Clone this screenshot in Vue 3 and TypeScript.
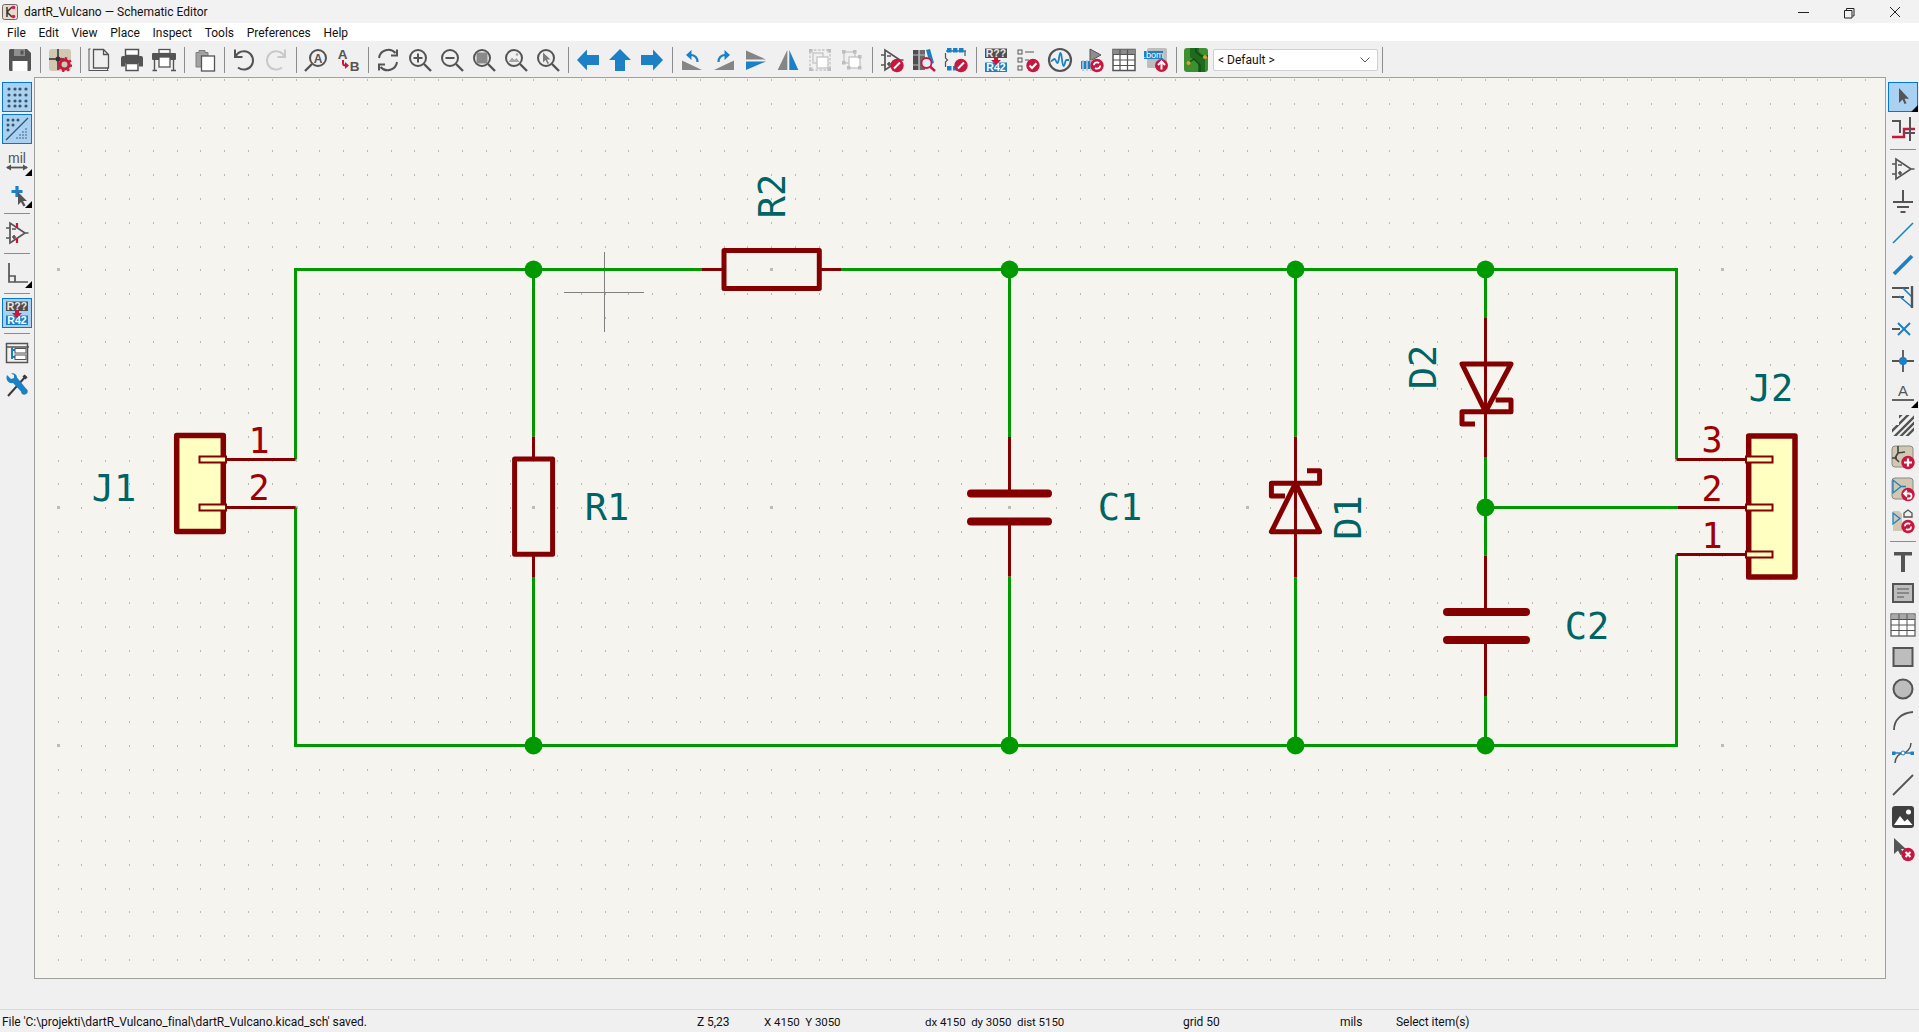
<script setup lang="ts">
const G = '#545454'
const B = '#1b80c6'
const R = '#c8173f'
const T = '#d2c7b0'

const line = (d: string, c = G, w = 1.6) => `<path d="${d}" fill="none" stroke="${c}" stroke-width="${w}"/>`
const mag = (inner: string) =>
  `<circle cx="10" cy="10" r="8" fill="none" stroke="${G}" stroke-width="2"/>${line('M16 16l7 7', G, 2.4)}${inner}`
const badge = (inner: string, cx = 17, cy = 17.5, r = 6.7) => `<circle cx="${cx}" cy="${cy}" r="${r}" fill="${R}"/>${inner}`
const pencil = badge(line('M14 20.5l6-6', '#fff', 2))
const tick = badge(line('M13.5 17.5l2.5 2.5 4.5-4.8', '#fff', 2))
const plus = badge(line('M17 13.5v8M13 17.5h8', '#fff', 2.2))
const back = badge(line('M14 16.5h4a2.5 2.5 0 0 1 0 5h-2M16 13.5l-3 3 3 3', '#fff', 1.8))
const syncMark = `<circle cx="17" cy="17.5" r="3.2" fill="none" stroke="#fff" stroke-width="1.7" stroke-dasharray="7 3"/>`
const sync = badge(syncMark)
const opamp = (c = G) => line('M5 2v20l15-10zM20 12h3.5M1 7h4M1 17h4M7 8h4M9 14v4M7 16h4', c, 1.7)
const label = (s: string, x: number, y: number, size: number, fill = G, weight = 700) =>
  `<text x="${x}" y="${y}" font-size="${size}" font-family="'Liberation Sans',sans-serif" font-weight="${weight}" fill="${fill}" text-anchor="middle">${s}</text>`
const annotate = `<rect x="1" y="0.5" width="22" height="9.5" fill="#4e4e4e"/>${label('R??', 12, 9, 10.5, '#e8e8e8')}<rect x="1" y="14.5" width="22" height="9.5" fill="${B}"/>${label('R42', 12, 23, 10.5, '#fff')}<path d="M10 9h4v3h3l-5 5-5-5h3z" fill="${R}"/>`
const squares = (pts: number[][], size = 3.5, fill = '#bdbdbd') =>
  pts.map(p => `<rect x="${p[0]}" y="${p[1]}" width="${size}" height="${size}" fill="${fill}"/>`).join('')

const icons: Record<string, string> = {
  save: `<path fill="${G}" d="M2.5 1H19l4 4v16.5a1.5 1.5 0 0 1-1.5 1.5h-19A1.5 1.5 0 0 1 1 21.5v-19A1.5 1.5 0 0 1 2.5 1z"/><rect x="6" y="1" width="11" height="7" fill="#8f8f8f"/><rect x="12.5" y="2.5" width="3" height="4" fill="${G}"/><rect x="4.5" y="13" width="15" height="10" fill="#fff"/>`,
  setup: `<rect x="1" y="1" width="22" height="22" rx="3" fill="${T}"/>${line('M10 1v8M1 11h7M12 11h4M10 13v9', '#555', 2)}<circle cx="10" cy="11" r="2.5" fill="#333"/><circle cx="16.5" cy="16.5" r="4.5" fill="none" stroke="${R}" stroke-width="3"/><circle cx="16.5" cy="16.5" r="6.6" fill="none" stroke="${R}" stroke-width="2" stroke-dasharray="2.4 2.8"/>`,
  newpage: line('M5.5 1.5h10l5 5V20h-15zM15.5 1.5v5h5', G, 1.3) + line('M1 1v22M1 22.5h19.5M.5 1h2M19.5 20v3', G, 1),
  print: `<rect x="5.5" y="1.5" width="13" height="6" fill="#fff" stroke="${G}" stroke-width="1.5"/><path d="M3 8h18a2 2 0 0 1 2 2v8.5h-4V15H5v3.5H1V10a2 2 0 0 1 2-2z" fill="${G}"/><rect x="6" y="15.5" width="12" height="7" fill="#fff" stroke="${G}" stroke-width="1.5"/>`,
  plot: `<rect x="7" y="1.5" width="11" height="4" fill="#fff" stroke="${G}" stroke-width="1.3"/><rect x="0" y="5" width="24" height="7" rx="1" fill="${G}"/><rect x="7" y="9" width="11" height="10" fill="#fff" stroke="${G}" stroke-width="1.3"/>${line('M2.5 12v10M21.5 12v10M.5 22.5H5M19 22.5h5', G, 1.4)}`,
  paste: `<path d="M4 4.5h3v-2h6v2h3V19H4z" fill="#a2a2a2" stroke="#7e7e7e"/><rect x="9.5" y="8" width="13" height="15" fill="#fff" stroke="${G}" stroke-width="1.3"/>`,
  undo: line('M3 1.5V9h7.5M3.5 8.5A9.2 9.2 0 1 1 6 19.5', G, 2),
  redo: line('M21 1.5V9h-7.5M20.5 8.5A9.2 9.2 0 1 0 18 19.5', '#c9c9c9', 2),
  find: `<circle cx="14" cy="10" r="8" fill="none" stroke="${G}" stroke-width="2"/>${line('M8 16l-7 7', G, 2.4)}${label('A', 14, 14.5, 12, G)}`,
  replace: `${label('A', 6.5, 11, 13.5, G)}${label('B', 18.5, 22.5, 13.5, G)}${line('M7 12v3a2.5 2.5 0 0 0 2.5 2.5', R, 2)}<path d="M9 14l4 3.5-4 3.5z" fill="${R}"/>`,
  refresh: line('M3 10a9.5 9.5 0 0 1 16.5-5M21 14a9.5 9.5 0 0 1-16.5 5', G, 2) + line('M21 1.5v6h-6M3 22.5v-6h6', G, 2),
  zoomin: mag(line('M10 5.5v9M5.5 10h9', G, 2)),
  zoomout: mag(line('M5.5 10h9', G, 2)),
  zoomfit: mag(`<rect x="4.5" y="4.5" width="11" height="11" rx="1" fill="#8a8a8a"/>`),
  zoomobj: mag(`<path d="M4.5 14L8 9.5l2.5 2.5 2-2 3 4z" fill="#a5a5a5"/><circle cx="13" cy="6.5" r="1.3" fill="#a5a5a5"/>`),
  zoomsel: mag(`<path d="M7 4.5v10L9.500 12l2 4 1.500-.8-2-3.800h3.500z" fill="#7c7c7c"/>`),
  left: `<path fill="${B}" d="M1 12L11 1.5V7h12v10H11v5.5z"/>`,
  up: `<path fill="${B}" d="M12 1l11 11h-6v11H7V12H1z"/>`,
  right: `<path fill="${B}" d="M23 12L13 1.5V7H1v10h12v5.5z"/>`,
  rotccw: `<path fill="#858585" d="M2 12.5V22h20z"/>${line('M17.5 14a6.5 6.5 0 0 0-6.5-7', B, 2.2)}<path fill="${B}" d="M6 7l5.5-5v10z"/>`,
  rotcw: `<path fill="#858585" d="M22 12.5V22H2z"/>${line('M6.5 14a6.5 6.5 0 0 1 6.5-7', B, 2.2)}<path fill="${B}" d="M18 7l-5.5-5v10z"/>`,
  mirrorv: `<path fill="#858585" d="M2 2.5v9h20z"/><path fill="${B}" d="M2 13.5V22l20-8.500z"/>`,
  mirrorh: `<path fill="#858585" d="M11.3 2v20H1.700z"/><path fill="${B}" d="M13.3 2v20h9z"/>`,
  group: `<rect x="2" y="2" width="20" height="20" fill="none" stroke="#c4c4c4" stroke-width="1.3" stroke-dasharray="2.5 1.5"/><rect x="5" y="5" width="10" height="10" fill="none" stroke="#c4c4c4" stroke-width="1.3"/><rect x="9" y="9" width="11" height="11" fill="#fff" stroke="#c4c4c4" stroke-width="1.3"/>${squares([[1, 1], [19.5, 1], [1, 19.5], [19.5, 19.5]])}`,
  ungroup: `<rect x="4" y="4" width="11" height="11" fill="none" stroke="#c4c4c4" stroke-width="1.3"/><rect x="9" y="9" width="11" height="11" fill="#fff" stroke="#c4c4c4" stroke-width="1.3"/>${squares([[2, 2], [13, 2], [2, 13], [18, 7], [7, 18], [18, 18]])}`,
  symedit: opamp() + pencil,
  browser: `<rect x="1" y="2" width="5.5" height="20" fill="#4e4e4e"/><rect x="7.5" y="2" width="5.5" height="20" fill="#6a6a6a"/>${line('M1 7h5.5M7.5 7H13M1 17h5.5', '#bbb', 1)}<path d="M14 2l4-1 4 14-4 1z" fill="${B}"/><circle cx="14.5" cy="15" r="5" fill="#e8eef2" stroke="${R}" stroke-width="1.8"/>${line('M18 18.5l5 4.5', R, 2.4)}`,
  fpedit: `${squares([[3, 0], [9, 0], [15, 0], [3, 18], [9, 18]], 4.5, B)}${line('M1.5 5v5l2 2-2 2v5M21 3v5', G, 1.2)}${line('M2 3h20', B, 1.5)}${pencil}`,
  annotate,
  erc: `<rect x="2" y="2" width="4" height="4" fill="none" stroke="${G}"/><rect x="2" y="10" width="4" height="4" fill="none" stroke="${G}"/><rect x="2" y="18" width="4" height="4" fill="none" stroke="${G}"/>${line('M9 4h9M9 12h4', G, 1.2)}${tick}`,
  sim: `<circle cx="12" cy="12" r="11" fill="none" stroke="${G}" stroke-width="2.2"/>${line('M3 13c2 0 2-2 3.5-2s1.500 4 3 4 1.500-10 3-10 1.500 13 3 13 1.500-6 3-6h2.500', B, 1.8)}`,
  assign: `<path d="M10 1v12l11-6z" fill="#8d8d8d" stroke="${G}"/><rect x="1" y="13" width="13" height="8" fill="${B}"/>${line('M3 12v11M7 12v11M11 12v11', '#b8c8d4', 1.6)}${sync}`,
  table: `<rect x="1" y="1.5" width="22" height="21" fill="#fff" stroke="${G}" stroke-width="1.5"/><rect x="1" y="1.5" width="22" height="5" fill="#8a8a8a"/>${line('M1 6.5h22M1 12h22M1 17.5h22M8 1.5v21M15.5 1.5v21', G, 1.2)}`,
  bom: `<rect x="3" y="0" width="20" height="20" rx="1.5" fill="#bdbdbd"/><rect x="0" y="3" width="19" height="8" fill="${B}"/>${label('.bom', 9.5, 10, 9, '#fff', 400)}${badge(line('M17.5 21.5v-8M14 17l3.5-3.5L21 17', '#fff', 2), 17.5, 17.5, 6.5)}`,
  pcb: `<rect x="0" y="0" width="24" height="24" rx="3" fill="#3e8f2d"/><path d="M6 0h9v4l6 5v15h-7v-9L6 9z" fill="#1e6a1e"/>${line('M4 15l6-4 6 6v7M12 0v4l5 4h7', '#0c4d14', 1.3)}<circle cx="4.5" cy="15" r="2" fill="#e0a030"/><circle cx="21" cy="9" r="2" fill="#e0a030"/>`,
  grid: [4, 10, 16, 21].flatMap(y => [4, 10, 15, 21].map(x => `<circle cx="${x}" cy="${y}" r="1.6" fill="#3d5468"/>`)).join(''),
  gridover: `${[3, 8, 13].flatMap(y => [3, 8, 13].map(x => x + y < 20 ? `<circle cx="${x}" cy="${y}" r="1.5" fill="#3d5468"/>` : '')).join('')}${line('M1 23L23 1', '#3d5468', 1.2)}${[21, 18, 15, 12, 21, 18, 15, 21, 18, 21].map((x, i) => `<circle cx="${x}" cy="${i < 4 ? 21 : i < 7 ? 18 : i < 9 ? 15 : 12}" r=".8" fill="#3d5468"/>`).join('')}`,
  mil: `${label('mil', 12, 13.5, 14, G, 400)}${line('M2 18.5h20', G, 1.8)}<path d="M1 18.5l5-3v6zM23 18.5l-5-3v6z" fill="${G}"/>`,
  cursor: `${line('M12 5v11M6.5 10.500h11', B, 3.2)}<path d="M13 11v13l3-3 2.5 4.5 2-1-2.500-4.500h4z" fill="#555"/>`,
  opampsel: opamp() + line('M12 2v5M12 17v5', R, 2.2),
  axes: line('M4 2v19h19M4 15h6v6', G, 1.7),
  hier: `<rect x="1.5" y="2.5" width="21" height="19" fill="none" stroke="${G}" stroke-width="1.5"/>${line('M1 6h23', G, 1.5)}${line('M7 6v12M7 9h3M7 16h3', B, 2)}<rect x="10" y="7.5" width="11" height="4.5" fill="#fff" stroke="${G}"/><rect x="10" y="14" width="11" height="4.5" fill="#fff" stroke="${G}"/>`,
  tools: `${line('M3 23L21 3', '#3a3a3a', 2)}${line('M18.5 2.5l3 3', '#3a3a3a', 3)}<path d="M2 2l4 4 3-1V2L6 .5c3-1 6 1 6 4l9 11c2 1 3 5-1 6-3 1-4-2-4-3L8 10C4 11 0 7 2 2z" fill="${B}"/>`,
  select: `<path d="M8 3v15l3.5-3.5 2 4.500 2-.8-2-4.500H18z" fill="#555"/>`,
  highlight: line('M1 4h8v12', G, 2) + line('M1 20h12v-8h11', R, 2.4) + line('M19 0v24M13 16h11', G, 2),
  opampr: opamp(),
  ground: line('M12 1v12M2 13h20M6 18h12M9.5 23h5', G, 2),
  wire: line('M2 22L22 2', B, 1.6),
  bus: line('M3 21L21 3', B, 3.8),
  entry: line('M1 3h17M1 12h12', G, 2) + line('M12 3l9 9M8 11l13 11', B, 1.6) + line('M21 1v22', G, 2.4),
  noconn: line('M1 12h8', G, 2) + line('M7 6l12 12M19 6L7 18', B, 2),
  junction: line('M1 12h22M12 1v22', G, 1.8) + `<circle cx="12" cy="12" r="4" fill="${B}"/>`,
  textlabel: `${label('A', 12, 15, 15, G, 400)}${line('M1 19h22', G, 1.8)}`,
  hatch: `<clipPath id="hatch-clip"><path d="M8 2h15v21H1V12h7z"/></clipPath><g clip-path="url(#hatch-clip)"><rect x="1" y="2" width="22" height="21" fill="#f2f2f2"/>${line('M-2 14L14-2M-2 21L22-3M3 24L27 0M9 24L27 6M15 24l12-12', G, 2.4)}</g>`,
  sheetadd: `<rect x="1" y="1" width="21" height="21" rx="3" fill="${T}" stroke="#8a8a8a"/>${line('M7 1v7M1 13h5M7 8l-3 5 4 4M7 8l7-1', '#444', 1.6)}${plus}`,
  sheetback: `<rect x="1" y="1" width="21" height="21" rx="3" fill="${T}" stroke="#8a8a8a"/>${line('M2 3v13l8-6.5zM10 9.5h5', B, 1.3)}${back}`,
  sheetsync: `<path d="M2 2h6l3 3v17H2z" fill="${T}"/>${line('M2 4v11l7-5.5z', B, 1.3)}${line('M13 4l4-3 4 3v4h-8z', G, 1.3)}${sync}`,
  text: `<path d="M3 3h18v3.5h-7V23h-4V6.5H3z" fill="${G}"/>`,
  textbox: `<rect x="2" y="3" width="20" height="18" fill="#bdbdbd" stroke="${G}" stroke-width="2"/>${line('M6 8h12M6 12h12M6 16h7', G, 1.2)}`,
  tableb: `<rect x="0" y="1" width="24" height="22" fill="#fff" stroke="${G}" stroke-width="1.2"/><rect x=".5" y="1.5" width="23" height="5" fill="#a8a8a8"/>${line('M0 6.5h24M0 12h24M0 17.5h24M8 1v22M16 1v22', G, 1)}`,
  rect: `<rect x="2.5" y="3" width="19" height="18" fill="#bdbdbd" stroke="${G}" stroke-width="2"/>`,
  circle: `<circle cx="12" cy="12" r="9.5" fill="#bdbdbd" stroke="${G}" stroke-width="2"/>`,
  arc: line('M3 21C3 11 10 4 22 3', G, 1.8),
  bezier: line('M4 12h16', B, 1.5) + line('M4 22c0-6 5-10 8-10s8-4 8-10', G, 1.5) + `<rect x="1" y="10.5" width="3.5" height="3.5" fill="${B}"/><rect x="19.5" y="10.5" width="3.5" height="3.5" fill="${B}"/><circle cx="12" cy="12" r="2" fill="#fff" stroke="${B}"/>`,
  lineb: line('M2 22L22 2', G, 1.8),
  image: `<rect x="1" y="1" width="22" height="22" rx="3" fill="#3f3f3f"/><circle cx="17.5" cy="7" r="2.5" fill="#fff"/><path d="M3 20l6-9 4.5 5.5 3-2.5 5 6z" fill="#fff"/>`,
  delete: `<path d="M3 1v16l4-3.5 2.5 4.5 3-2-2.500-4H15z" fill="#555"/>${badge(line('M14.5 15l5 5M19.5 15l-5 5', '#fff', 2))}`,
}

const topTools = ['save', '|', 'setup', '|', 'newpage', 'print', 'plot', '|', 'paste', '|', 'undo', 'redo', '|', 'find', 'replace', '|', 'refresh', 'zoomin', 'zoomout', 'zoomfit', 'zoomobj', 'zoomsel', '|', 'left', 'up', 'right', '|', 'rotccw', 'rotcw', 'mirrorv', 'mirrorh', 'group', 'ungroup', '|', 'symedit', 'browser', 'fpedit', '|', 'annotate', 'erc', 'sim', 'assign', 'table', 'bom', '|', 'pcb']
const leftTools = ['grid*', 'gridover*', 'mil^', 'cursor^', '|', 'opampsel', '|', 'axes^', '|', 'annotate*', '|', 'hier', 'tools']
const rightTools = ['select*^', 'highlight', '|', 'opampr', 'ground', 'wire', 'bus', 'entry', 'noconn', 'junction', 'textlabel^', 'hatch', 'sheetadd', 'sheetback', 'sheetsync', '|', 'text', 'textbox', 'tableb', 'rect', 'circle', 'arc', 'bezier', 'lineb', 'image', 'delete']
const iconName = (t: string) => t.replace(/[*^]/g, '')

const menus = ['File', 'Edit', 'View', 'Place', 'Inspect', 'Tools', 'Preferences', 'Help']

// schematic grid: 50 mil at Z 5,23
const pitch = 23.78
const gridX = 295.5
const gridY = 269.3
let small = ''
let large = ''
for (let i = -11; i < 67; i++) {
  for (let j = -8; j < 30; j++) {
    const x = Math.round(gridX + i * pitch)
    const y = Math.round(gridY + j * pitch)
    if (x < 36 || x > 1883 || y < 79 || y > 976) continue
    if (i % 10 === 0 && j % 10 === 0) large += `M${x - 1} ${y - 1}h3v3h-3z`
    else small += `M${x} ${y}h1v2h-1z`
  }
}

const topY = 269.5
const botY = 745.5
const wires = [
  `M702 ${topY}H295.5V459.5`,
  `M295.5 507.5V${botY}H1676.5V554.5`,
  `M841 ${topY}H1676.5V459.5`,
  `M533.5 ${topY}V436.7`, `M533.5 577.7V${botY}`,
  `M1009.5 ${topY}V437`, `M1009.5 576.5V${botY}`,
  `M1295.5 ${topY}V436.7`, `M1295.5 577.3V${botY}`,
  `M1485.5 ${topY}V318`, 'M1485.5 457.7V555.7', `M1485.5 696V${botY}`,
  'M1485.5 507.5H1678',
]
const pins = [
  `M702 ${topY}H724`, `M819 ${topY}H841`,
  'M533.5 436.7V459', 'M533.5 554.3V577.7',
  'M1009.5 437V493', 'M1009.5 521V576.5',
  'M1295.5 436.7V577.3', 'M1485.5 318V457.7',
  'M1485.5 555.7V612', 'M1485.5 640V696',
  'M226 459.5H295.5', 'M226 507.5H295.5',
  'M1676.5 459.5H1748', 'M1678 507.5H1748', 'M1676.5 554.5H1748',
]
const junctions: [number, number][] = [
  [533.5, topY], [1009.5, topY], [1295.5, topY], [1485.5, topY],
  [533.5, botY], [1009.5, botY], [1295.5, botY], [1485.5, botY],
  [1485.5, 507.5],
]
</script>

<template>
  <div class="window">
    <header class="titlebar">
      <svg class="app-icon" width="16" height="16" viewBox="0 0 16 16">
        <rect x=".5" y=".5" width="15" height="15" rx="2" fill="#e8dcc8" stroke="#6a6a6a" />
        <path d="M5 3v10M5 8l5-5M5 8l5 5" fill="none" stroke="#333" stroke-width="1.5" />
        <circle cx="11.5" cy="3.5" r="1.8" fill="#d81b60" />
        <circle cx="11.5" cy="12.5" r="1.8" fill="#d81b60" />
      </svg>
      <span class="title">dartR_Vulcano — Schematic Editor</span>
      <div class="win-controls">
        <svg width="46" height="20" viewBox="0 0 46 20"><path d="M18 10.5h11" stroke="#222" fill="none" /></svg>
        <svg width="46" height="20" viewBox="0 0 46 20"><path d="M18.5 8.5H26V16h-7.5zM20.5 8V6.5H28V14H26.5" stroke="#222" fill="none" /></svg>
        <svg width="46" height="20" viewBox="0 0 46 20"><path d="M18 5l10 10M28 5L18 15" stroke="#222" fill="none" /></svg>
      </div>
    </header>

    <nav class="menubar">
      <span v-for="m in menus" :key="m" class="menu-item">{{ m }}</span>
    </nav>

    <div class="toolbar-top">
      <template v-for="(t, i) in topTools" :key="i">
        <span v-if="t === '|'" class="sep-v"></span>
        <span v-else class="tool"><svg width="24" height="24" viewBox="0 0 24 24" v-html="icons[t]"></svg></span>
      </template>
      <div class="combo">
        <span>&lt; Default &gt;</span>
        <svg width="10" height="6" viewBox="0 0 10 6"><path d="M.5 .5L5 5 9.5 .5" fill="none" stroke="#555" /></svg>
      </div>
      <span class="sep-v"></span>
    </div>

    <main class="workspace">
      <aside class="toolbar-side left">
        <template v-for="(t, i) in leftTools" :key="i">
          <span v-if="t === '|'" class="sep-h"></span>
          <span v-else class="tool-side" :class="{ active: t.includes('*'), corner: t.includes('^') }">
            <svg width="24" height="24" viewBox="0 0 24 24" v-html="icons[iconName(t)]"></svg>
          </span>
        </template>
      </aside>

      <section class="canvas">
        <svg class="sheet" width="1850" height="900" viewBox="35 78 1850 900">
          <path :d="small" fill="#b8b8b4" shape-rendering="crispEdges" />
          <path :d="large" fill="#bcbcb8" shape-rendering="crispEdges" />

          <!-- crosshair -->
          <path d="M604.5 252V332M564 292.5H644" stroke="#808080" fill="none" />

          <path v-for="d in wires" :key="d" :d="d" class="wire" />
          <path v-for="d in pins" :key="d" :d="d" class="pin" />
          <circle v-for="(j, i) in junctions" :key="i" :cx="j[0]" :cy="j[1]" r="9" fill="#009a00" />

          <!-- J1 -->
          <rect x="176.7" y="435.4" width="46.6" height="96" class="body-fill" />
          <rect x="199.5" y="456.5" width="26.5" height="6" class="stub" />
          <rect x="199.5" y="504.5" width="26.5" height="6" class="stub" />
          <text x="259" y="452.7" class="pin-num">1</text>
          <text x="259" y="500.4" class="pin-num">2</text>
          <text x="114" y="500.7" class="field">J1</text>

          <!-- R1, R2 -->
          <rect x="514.6" y="459" width="38" height="95.3" class="body" />
          <text x="607" y="520" class="field">R1</text>
          <rect x="724" y="250.5" width="95.3" height="38" class="body" />
          <text x="784.5" y="196" class="field" transform="rotate(-90 784.5 196)">R2</text>

          <!-- C1, C2 -->
          <path d="M971 493.5H1048M971 521.5H1048" class="plate" />
          <text x="1120" y="520" class="field">C1</text>
          <path d="M1447 612H1526M1447 640H1526" class="plate" />
          <text x="1587" y="639" class="field">C2</text>

          <!-- D1, D2 -->
          <path d="M1295.5 483.3L1271.4 531.7H1319.6ZM1285 496H1271.4V483.3H1319.6V470.7H1307" class="body" />
          <text x="1360.5" y="517.5" class="field" transform="rotate(-90 1360.5 517.5)">D1</text>
          <path d="M1485.5 411.7L1462 364H1511ZM1475 424H1462V411.7H1511V400H1495.6" class="body" />
          <text x="1436.3" y="367" class="field" transform="rotate(-90 1436.3 367)">D2</text>

          <!-- J2 -->
          <rect x="1748.7" y="436" width="46.3" height="141" class="body-fill" />
          <rect x="1746" y="456.5" width="26.5" height="6" class="stub" />
          <rect x="1746" y="504.5" width="26.5" height="6" class="stub" />
          <rect x="1746" y="551.5" width="26.5" height="6" class="stub" />
          <text x="1712" y="452.3" class="pin-num">3</text>
          <text x="1712" y="500.7" class="pin-num">2</text>
          <text x="1712" y="548" class="pin-num">1</text>
          <text x="1771" y="400.7" class="field">J2</text>
        </svg>
      </section>

      <aside class="toolbar-side right">
        <template v-for="(t, i) in rightTools" :key="i">
          <span v-if="t === '|'" class="sep-h"></span>
          <span v-else class="tool-side" :class="{ active: t.includes('*'), corner: t.includes('^') }">
            <svg width="24" height="24" viewBox="0 0 24 24" v-html="icons[iconName(t)]"></svg>
          </span>
        </template>
      </aside>
    </main>

    <footer class="statusbar">
      <span class="st-msg">File 'C:\projekti\dartR_Vulcano_final\dartR_Vulcano.kicad_sch' saved.</span>
      <span class="st-zoom">Z 5,23</span>
      <span class="st-pos">X 4150&nbsp; Y 3050</span>
      <span class="st-delta">dx 4150&nbsp; dy 3050&nbsp; dist 5150</span>
      <span class="st-grid">grid 50</span>
      <span class="st-unit">mils</span>
      <span>Select item(s)</span>
    </footer>
  </div>
</template>

<style>
html, body {
  margin: 0;
  overflow: hidden;
}
</style>

<style scoped>
.window {
  display: flex;
  flex-direction: column;
  width: 1919px;
  height: 1032px;
  background: #f0f0f0;
  font-family: Roboto, "Liberation Sans", sans-serif;
  font-size: 12px;
  color: #111;
}

.titlebar {
  height: 23px;
  display: flex;
  align-items: center;
  background: #f2f2f2;
}

.app-icon {
  margin: 0 6px 0 2px;
  flex-shrink: 0;
}

.win-controls {
  margin-left: auto;
  display: flex;
  margin-right: 1px;
}

.menubar {
  height: 18px;
  box-sizing: border-box;
  padding: 1px 0 0 7px;
  display: flex;
  align-items: center;
  background: #fff;
  gap: 12.7px;
}

.toolbar-top {
  height: 36px;
  box-sizing: border-box;
  display: flex;
  align-items: center;
  padding: 2px 0 0 4px;
}

.tool {
  width: 32px;
  height: 32px;
  display: flex;
  align-items: center;
  justify-content: center;
  flex-shrink: 0;
}

.tool svg,
.tool-side svg {
  overflow: visible;
}

.sep-v {
  width: 8px;
  height: 26px;
  flex-shrink: 0;
  background: linear-gradient(#8c8c8c, #8c8c8c) center / 1px 100% no-repeat;
}

.combo {
  width: 165px;
  height: 22px;
  margin-left: 1px;
  box-sizing: border-box;
  display: flex;
  align-items: center;
  justify-content: space-between;
  padding: 0 7px 0 4px;
  background: #fff;
  border: 1px solid #d0d0d0;
  border-radius: 2px;
}

.workspace {
  flex: 1;
  display: flex;
  min-height: 0;
  padding-bottom: 30px;
}

.toolbar-side {
  display: flex;
  flex-direction: column;
  align-items: center;
  padding-top: 4px;
  flex-shrink: 0;
}

.toolbar-side.left {
  width: 34px;
}

.toolbar-side.right {
  width: 33px;
}

.tool-side {
  position: relative;
  width: 30px;
  height: 32px;
  display: flex;
  align-items: center;
  justify-content: center;
  box-sizing: border-box;
  flex-shrink: 0;
}

.tool-side.active::before {
  content: "";
  position: absolute;
  inset: 1px 0;
  background: #a9d1f2;
  border: 1px solid #0078d7;
}

.tool-side svg {
  position: relative;
}

.tool-side.corner::after {
  content: "";
  position: absolute;
  right: 0;
  bottom: 1px;
  border-style: solid;
  border-width: 0 0 7px 7px;
  border-color: transparent transparent #000 transparent;
}

.sep-h {
  width: 26px;
  height: 8px;
  flex-shrink: 0;
  background: linear-gradient(#8c8c8c, #8c8c8c) center / 100% 1px no-repeat;
}

.canvas {
  flex: 1;
  min-width: 0;
  background: #f5f4ef;
  border: 1px solid #a0a0a0;
}

.sheet {
  display: block;
}

.wire {
  fill: none;
  stroke: #009a00;
  stroke-width: 3;
}

.pin {
  fill: none;
  stroke: #840000;
  stroke-width: 3;
}

.body {
  fill: none;
  stroke: #840000;
  stroke-width: 5;
  stroke-linejoin: round;
}

.body-fill {
  fill: #ffffc2;
  stroke: #840000;
  stroke-width: 5.5;
  stroke-linejoin: round;
}

.stub {
  fill: #ffffc2;
  stroke: #840000;
  stroke-width: 2;
}

.plate {
  fill: none;
  stroke: #840000;
  stroke-width: 8;
  stroke-linecap: round;
}

.field,
.pin-num {
  font-family: "DejaVu Sans Mono", monospace;
  text-anchor: middle;
}

.field {
  font-size: 37px;
  fill: #006464;
}

.pin-num {
  font-size: 35px;
  fill: #a00000;
}

.statusbar {
  height: 23px;
  box-sizing: border-box;
  display: flex;
  align-items: center;
  padding: 1px 0 0 2px;
  border-top: 1px solid #d9d9d9;
  letter-spacing: -0.05px;
}

.statusbar span {
  white-space: nowrap;
  flex-shrink: 0;
}

.st-msg { width: 695px; }
.st-zoom { width: 67px; }
.st-pos { width: 161px; font-size: 11.5px; }
.st-delta { width: 258px; font-size: 11.5px; }
.st-grid { width: 157px; }
.st-unit { width: 56px; }
</style>
